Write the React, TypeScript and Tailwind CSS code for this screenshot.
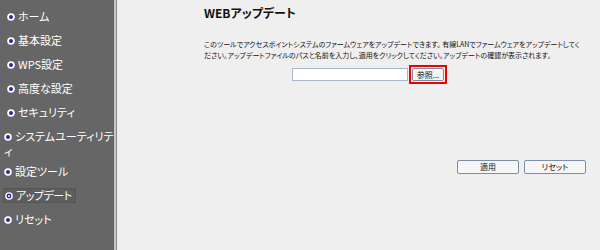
import React from "react";

const items: { label: string; indent: boolean; selected?: boolean }[] = [
  { label: "ホーム", indent: true },
  { label: "基本設定", indent: true },
  { label: "WPS設定", indent: true },
  { label: "高度な設定", indent: true },
  { label: "セキュリティ", indent: true },
  { label: "システムユーティリティ", indent: false },
  { label: "設定ツール", indent: false },
  { label: "アップデート", indent: false, selected: true },
  { label: "リセット", indent: false },
];

function Bullet({ selected }: { selected?: boolean }) {
  return (
    <svg width="8" height="8" viewBox="0 0 8 8" className="inline-block mr-[3px] align-[0px]">
      <circle cx="4" cy="4" r="3.8" fill="#ffffff" />
      {selected ? (
        <>
          <circle cx="4" cy="4" r="2.4" fill="#2a2a9a" />
          <circle cx="4" cy="4" r="1" fill="#ffffff" />
        </>
      ) : (
        <circle cx="4" cy="4" r="2" fill="#2a2a9a" />
      )}
    </svg>
  );
}

export default function App() {
  return (
    <div
      className="flex w-[600px] h-[250px] overflow-hidden [font-feature-settings:'palt']"
      style={{ fontFamily: '"Noto Sans CJK JP", "Liberation Sans", sans-serif' }}
    >
      <div className="w-[114px] shrink-0 bg-[#666666] pt-[9px] text-white text-[11px] leading-[15px]">
        {items.map((it, i) => (
          <div
            key={it.label}
            className={`${it.indent ? "pl-[7px]" : "pl-[4px]"} ${i === 5 ? "mb-[5px]" : "mb-[9px]"}`}
          >
            {it.selected ? (
              <span className="inline-block align-top leading-[13px] tracking-[-0.5px] border border-[#555555] bg-[#5e5e5e] -ml-[1px] pr-[3px] pl-[1px]">
                <Bullet selected />
                {it.label}
              </span>
            ) : (
              <span>
                <Bullet />
                {it.label}
              </span>
            )}
          </div>
        ))}
      </div>
      <div className="w-[2px] bg-[#c8c8c8] shrink-0" />
      <div className="w-[1px] bg-[#8a8a8a] shrink-0" />
      <div className="flex-1 bg-[#efefef] pl-[87px] pr-[14px] pt-[5px] text-[#111111]">
        <div className="text-[12px] font-bold leading-[16px]">WEBアップデート</div>
        <p className="mt-[18px] mr-[4px] text-[7px] leading-[11px]">
          このツールでアクセスポイントシステムのファームウェアをアップデートできます。 有線LANでファームウェアをアップデートしてください。アップデートファイルのパスと名前を入力し、適用をクリックしてください。アップデートの確認が表示されます。
        </p>
        <div className="flex items-center mt-[4px] ml-[88px]">
          <div className="w-[116px] h-[13px] bg-white border border-[#a9b8c8]" />
          <div className="ml-[1px] border-2 border-[#ee0000] p-[1px]">
            <div className="w-[32px] h-[13px] rounded-[2px] border border-[#7a8ea8] bg-[#f4f4f4] text-[8px] leading-[11px] text-center text-[#111]">
              参照...
            </div>
          </div>
        </div>
        <div className="flex justify-end gap-[5px] mt-[76px]">
          <div className="w-[62px] h-[14px] rounded-[2px] border border-[#7a8ea8] bg-[#f6f6f6] text-[8px] leading-[12px] text-center">
            適用
          </div>
          <div className="w-[62px] h-[14px] rounded-[2px] border border-[#7a8ea8] bg-[#f6f6f6] text-[8px] leading-[12px] text-center">
            リセット
          </div>
        </div>
      </div>
    </div>
  );
}
